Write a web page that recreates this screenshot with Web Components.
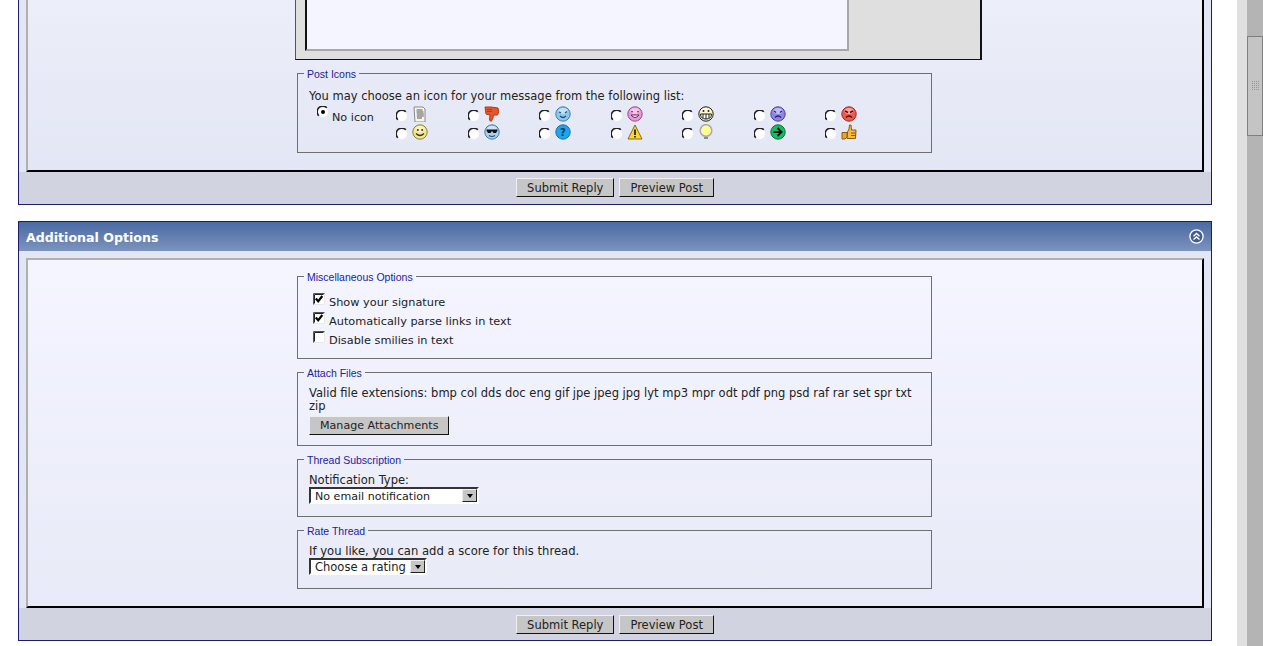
<!DOCTYPE html>
<html>
<head>
<meta charset="utf-8">
<title>Reply</title>
<style>
html,body{margin:0;padding:0;height:646px;overflow:hidden;background:#fff;}
body{font:11.5px "DejaVu Sans",Verdana,sans-serif;color:#222;}
</style>
</head>
<body>
<forum-page>
  <form-panel cut>
    <editor-stub></editor-stub>
    <option-box legend="Post Icons" style="margin-top:7px">
      <icon-picker></icon-picker>
    </option-box>
  </form-panel>
  <form-panel heading="Additional Options">
    <option-box legend="Miscellaneous Options">
      <div style="padding:10px 0 8px 4px;font-size:11.3px">
        <check-row checked>Show your signature</check-row>
        <check-row checked>Automatically parse links in text</check-row>
        <check-row>Disable smilies in text</check-row>
      </div>
    </option-box>
    <option-box legend="Attach Files">
      <div style="line-height:13px;padding-top:8px">Valid file extensions: bmp col dds doc eng gif jpe jpeg jpg lyt mp3 mpr odt pdf png psd raf rar set spr txt zip</div>
      <form-button small style="margin-top:3px;margin-bottom:10px">Manage Attachments</form-button>
    </option-box>
    <option-box legend="Thread Subscription">
      <div style="line-height:13px;padding-top:8px">Notification Type:</div>
      <fake-select width="170" style="margin-bottom:12px;font-size:11.1px">No email notification</fake-select>
    </option-box>
    <option-box legend="Rate Thread">
      <div style="line-height:13px;padding-top:8px;font-size:11.6px">If you like, you can add a score for this thread.</div>
      <fake-select width="118" style="margin-bottom:13px">Choose a rating</fake-select>
    </option-box>
  </form-panel>
</forum-page>

<script>
// page frame with the scrollbar on the right
class ForumPage extends HTMLElement{
constructor(){
    super();
    this.attachShadow({mode:'open'});
    this.shadowRoot.innerHTML=`
    <style>
        :host{display:flex;height:646px;overflow:hidden;}
        #main{width:1219px;padding-left:18px;box-sizing:content-box;}
        #main ::slotted(form-panel){margin-bottom:16px;width:1194px;}
        #track{width:10px;background:#e0e0e0;}
        #bar{width:16px;background:#b4b4b4;padding-top:36px;box-sizing:border-box;}
        #thumb{height:100px;box-sizing:border-box;border:1px solid #808080;background:#c4c4c4;display:flex;align-items:center;justify-content:center;}
        #grip{width:9px;height:9px;margin-top:-2px;background:conic-gradient(#969696 25%,#c4c4c4 0) 0 0/2px 2px;}
    </style>
    <div id="main"><slot></slot></div>
    <div id="track"></div>
    <div id="bar"><div id="thumb"><div id="grip"></div></div></div>`;
}
}

// outer panel: optional blue heading, framed content, button row
class FormPanel extends HTMLElement{
constructor(){
    super();
    this.attachShadow({mode:'open'});
    const heading=this.getAttribute('heading');
    this.shadowRoot.innerHTML=`
    <style>
        :host{display:block;box-sizing:border-box;border:1px solid #1c1c6e;background:#e3e6f4;}
        :host([cut]){border-top:0;}
        header{height:29px;background:linear-gradient(#4a6aa3,#7c93bd);color:#fff;font:bold 12.6px "DejaVu Sans",Verdana,sans-serif;display:flex;align-items:center;justify-content:space-between;padding:0 7px;}
        header span{margin-top:2px;}
        #wrap{padding:7px 7px 0;}
        :host([cut]) #wrap{padding-top:0;}
        #box{border:2px solid #000;border-top-color:#b0b0b0;border-left-color:#b0b0b0;background:linear-gradient(#f4f5ff,#e8eaf7);padding:10px 0 17px 269px;}
        :host([cut]) #box{border-top:0;padding-top:0;background:linear-gradient(#eceef9,#e3e6f4);}
        #btns{background:#d1d4e0;height:32px;display:flex;justify-content:center;align-items:flex-start;gap:5px;padding-top:6px;box-sizing:border-box;margin:0 -7px;}
        :host(:not([cut])) #btns{padding-top:7px;}
        svg{display:block;}
    </style>
    ${heading?`<header><span>${heading}</span>
      <svg width="15" height="15" viewBox="0 0 15 15"><circle cx="7.5" cy="7.5" r="6.6" fill="#3f5f9a" stroke="#fff" stroke-width="1.3"/><path d="M4.5 7.2l3-2.7 3 2.7M4.5 10.6l3-2.7 3 2.7" fill="none" stroke="#fff" stroke-width="1.4"/></svg></header>`:''}
    <div id="wrap">
      <div id="box"><slot></slot></div>
      <div id="btns"><form-button>Submit Reply</form-button><form-button>Preview Post</form-button></div>
    </div>`;
}
}

class EditorStub extends HTMLElement{
constructor(){
    super();
    this.attachShadow({mode:'open'});
    this.shadowRoot.innerHTML=`
    <style>
        :host{display:block;box-sizing:border-box;width:687px;height:60px;margin-left:-2px;background:#dfdfdf;border:solid #111;border-width:0 2px 1px 1px;border-left-color:#555;}
        div{box-sizing:border-box;width:544px;height:51px;margin-left:9px;background:#f4f5ff;border-left:2px solid #111;border-right:2px solid #a8a8a8;border-bottom:2px solid #a8a8a8;}
    </style><div></div>`;
}
}

class OptionBox extends HTMLElement{
constructor(){
    super();
    this.attachShadow({mode:'open'});
    this.shadowRoot.innerHTML=`
    <style>
        :host{display:block;width:635px;margin-bottom:7px;}
        :host(:last-child){margin-bottom:0;}
        fieldset{margin:0;padding:0 11px 0 11px;border:1px solid #6f6f6f;min-width:0;}
        legend{margin-left:-5px;padding:0 3px;color:#22229c;font:10.5px/13px "Liberation Sans",Tahoma,sans-serif;}
        legend span{display:block;transform:translateY(1px);}
    </style>
    <fieldset><legend><span>${this.getAttribute('legend')}</span></legend><slot></slot></fieldset>`;
}
}

class FormButton extends HTMLElement{
constructor(){
    super();
    this.attachShadow({mode:'open'});
    this.shadowRoot.innerHTML=`
    <style>
        :host{display:block;width:max-content;box-sizing:border-box;height:19px;line-height:18px;padding:0 10px;background:#c6c6c6;color:#222;border:1px solid;border-color:#f0f0f0 #111 #111 #f0f0f0;font-size:11.5px;}
        :host([small]){font-size:11.1px;}
    </style><slot></slot>`;
}
}

class CheckRow extends HTMLElement{
constructor(){
    super();
    this.attachShadow({mode:'open'});
    const mark=this.hasAttribute('checked')?'<path d="M2.800 5.500l2.400 2.800L9.300 3" fill="none" stroke="#000" stroke-width="2.200"/>':'';
    this.shadowRoot.innerHTML=`
    <style>
        :host{display:flex;height:19px;align-items:flex-start;gap:4px;}
        svg{flex:none;}
        span{line-height:13px;margin-top:3px;}
    </style>
    <svg width="12" height="12" viewBox="0 0 12 12"><rect width="12" height="12" fill="#fff"/><path d="M.5 12V.5H12" fill="none" stroke="#555"/><path d="M1.5 10.5v-9h9" fill="none" stroke="#222"/><path d="M.5 11.500h11v-11" fill="none" stroke="#e8e8e8"/>${mark}</svg>
    <span><slot></slot></span>`;
}
}

class FakeSelect extends HTMLElement{
constructor(){
    super();
    this.attachShadow({mode:'open'});
    this.shadowRoot.innerHTML=`
    <style>
        :host{display:flex;box-sizing:border-box;width:${this.getAttribute('width')}px;height:17px;background:#fff;border:2px solid;border-color:#333 #fff #fff #333;line-height:15px;}
        span{flex:1;padding-left:4px;}
        b{flex:none;box-sizing:border-box;width:15px;height:13px;background:#c6c6c6;border:1px solid;border-color:#f0f0f0 #222 #222 #f0f0f0;display:flex;align-items:center;justify-content:center;}
        i{width:0;height:0;border:3px solid transparent;border-top:4px solid #000;border-bottom:0;}
    </style>
    <span><slot></slot></span><b><i></i></b>`;
}
}

// the post icons: one small drawing per name
const face=(c,d,inner)=>`<circle cx="8" cy="8" r="7.2" fill="${c}" stroke="${d}"/><ellipse cx="8" cy="5" rx="4.5" ry="3" fill="#fff" opacity=".45"/>${inner}`;
const ICONS={
    doc:'<path d="M2 1h9l2 2v13H3z" fill="#f6f6f0" stroke="#888"/><path d="M4.500 4h6M4.500 6h7M4.800 8h7M4.800 10h7M5 12h5" stroke="#555"/>',
    down:'<path d="M1 1h6l7 1q1.500 4-.5 7H9.500q-.5 3-1 4.500L7 15.500 5.500 14l.5-5-4-1z" fill="#e4572a" stroke="#b03a12"/><path d="M3 3.500h5M3 5.500h5" stroke="#b03a12"/>',
    wink:face('#8cc8ee','#3f7fa8','<path d="M4 6l2 1M10 7l2-1.500M5 10q3 3 6 0" fill="none" stroke="#24506e" stroke-width="1.200"/>'),
    pink:face('#e89ad8','#9a4a90','<path d="M4 6q1-1 2 0M10 6q1-1 2 0" fill="none" stroke="#602a58"/><path d="M4 9q4 5 8 0z" fill="#fff" stroke="#602a58"/>'),
    grin:face('#fbf4b8','#222','<path d="M2.500 8h11q0 5-5.500 5T2.500 8z" fill="#fff" stroke="#222"/><path d="M5 8v4M8 8v5M11 8v4" stroke="#222"/><circle cx="5.500" cy="5" r="1" fill="#222"/><circle cx="10.500" cy="5" r="1" fill="#222"/>'),
    sad:face('#8e86e6','#4a42a0','<path d="M4 5l2 1.500M12 5l-2 1.500M5 11.500q3-3 6 0" fill="none" stroke="#262060" stroke-width="1.200"/>'),
    angry:face('#ee5a50','#a02820','<path d="M4 5l3 1.500M12 5L9 6.500M5 11.500q3-3 6 0" fill="none" stroke="#501008" stroke-width="1.400"/>'),
    smile:face('#f4e88c','#8a8030','<circle cx="5.800" cy="6" r="1" fill="#333"/><circle cx="10.200" cy="6" r="1" fill="#333"/><path d="M4 9.500q4 4 8 0" fill="none" stroke="#333" stroke-width="1.200"/>'),
    cool:face('#a8d0f0','#4a78a8','<path d="M2.500 5.500h11v1l-1.500 2.500H9.500L8 7 6.500 9H4L2.500 6.500z" fill="#111"/><path d="M5 11.500q3 2 6 0" fill="none" stroke="#24506e" stroke-width="1.200"/>'),
    help:'<circle cx="8" cy="8" r="7.200" fill="#20a4ec" stroke="#1070b0"/><text x="8" y="12" font-family="DejaVu Sans" font-size="10" font-weight="bold" text-anchor="middle" fill="#063a60">?</text>',
    warn:'<path d="M8 1l7 14H1z" fill="#fcd82c" stroke="#8a6a10" stroke-linejoin="round"/><path d="M8 5.500v5.500M8 12v1.500" stroke="#111" stroke-width="1.600"/>',
    bulb:'<circle cx="8" cy="6.500" r="5.800" fill="#ffff90" stroke="#a8a8b8" stroke-width="1.500"/><path d="M6 13h4v2H6z" fill="#8888a0"/>',
    go:'<circle cx="8" cy="8" r="7.200" fill="#10c060" stroke="#087038"/><path d="M3.500 8h7M7.500 4l4 4-4 4" fill="none" stroke="#111" stroke-width="2"/>',
    up:'<path d="M6.500 8l1.500-3 .5-4h1.500l.5 5h4.500l-.5 8.500H6z" fill="#f4bc40" stroke="#8a5c10"/><path d="M1 8.500h5V13L4 15H1z" fill="#e8a828" stroke="#8a5c10"/><path d="M10 9h5M10 11.500h5" stroke="#8a5c10"/>'
};

class PostIcon extends HTMLElement{
constructor(){
    super();
    this.attachShadow({mode:'open'});
    this.shadowRoot.innerHTML=`
    <style>:host{display:block;width:16px;height:16px;}svg{display:block;}</style>
    <svg width="16" height="16" viewBox="0 0 16 16">${ICONS[this.getAttribute('name')]}</svg>`;
}
}

class RadioDot extends HTMLElement{
constructor(){
    super();
    this.attachShadow({mode:'open'});
    const dot=this.hasAttribute('checked')?'<circle cx="6" cy="6" r="2" fill="#000"/>':'';
    this.shadowRoot.innerHTML=`
    <style>:host{display:block;width:12px;height:12px;}svg{display:block;}</style>
    <svg width="12" height="12" viewBox="0 0 12 12"><circle cx="6" cy="6" r="5.500" fill="#fff" stroke="#e8e8e8"/><path d="M1.800 9.800A5 5 0 0 1 9.800 1.800" fill="none" stroke="#222" stroke-width="1.600"/>${dot}</svg>`;
}
}

class IconPicker extends HTMLElement{
constructor(){
    super();
    this.attachShadow({mode:'open'});
    const top=['doc','down','wink','pink','grin','sad','angry'];
    const low=['smile','cool','help','warn','bulb','go','up'];
    const cell=n=>`<div class="c"><radio-dot></radio-dot><post-icon name="${n}"></post-icon></div>`;
    this.shadowRoot.innerHTML=`
    <style>
        :host{display:block;}
        p{margin:0;padding-top:9px;line-height:14px;}
        #grid{display:grid;grid-template-columns:81px repeat(7,71.5px);grid-auto-rows:18px;margin:2px 0 11px 6px;}
        #none{grid-row:span 2;display:flex;gap:3px;align-items:flex-start;padding-left:2px;}
        #none radio-dot{margin-top:1px;}
        #none span{line-height:14px;margin-top:6px;font-size:11.2px;}
        .c{display:flex;align-items:center;gap:4px;}
        .c radio-dot{margin-top:3px;}
    </style>
    <p>You may choose an icon for your message from the following list:</p>
    <div id="grid">
      <div id="none"><radio-dot checked></radio-dot><span>No icon</span></div>
      ${top.map(cell).join('')}${low.map(cell).join('')}
    </div>`;
}
}

customElements.define('radio-dot',RadioDot);
customElements.define('post-icon',PostIcon);
customElements.define('icon-picker',IconPicker);
customElements.define('form-button',FormButton);
customElements.define('check-row',CheckRow);
customElements.define('fake-select',FakeSelect);
customElements.define('option-box',OptionBox);
customElements.define('editor-stub',EditorStub);
customElements.define('form-panel',FormPanel);
customElements.define('forum-page',ForumPage);
</script>
</body>
</html>
